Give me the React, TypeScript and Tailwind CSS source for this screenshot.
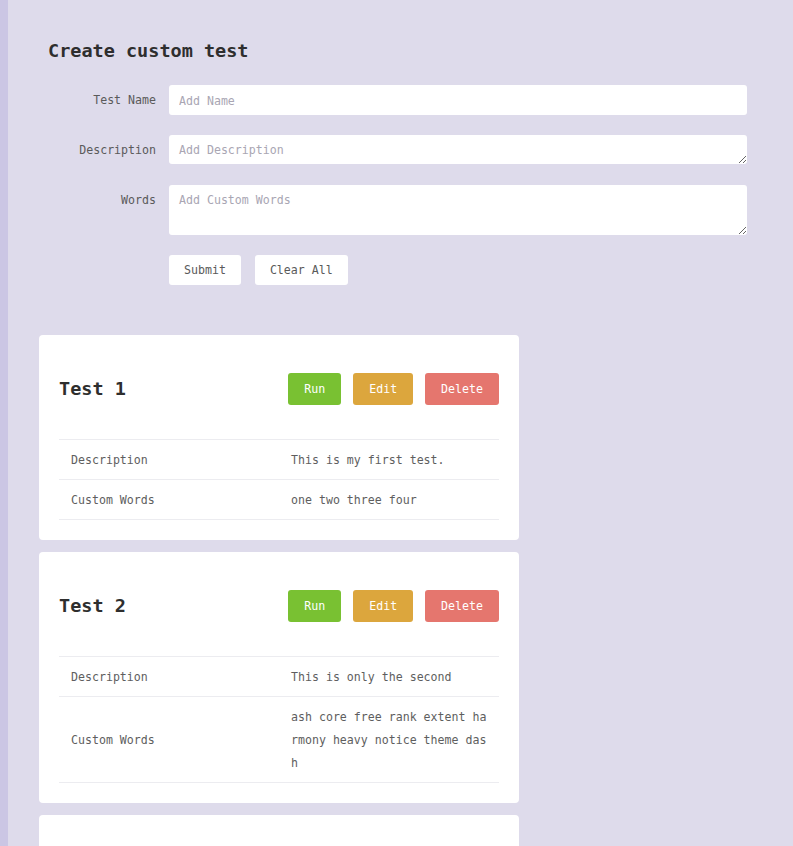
import React from "react";

const mono = { fontFamily: "'DejaVu Sans Mono', 'Liberation Mono', monospace" };

type Test = { name: string; description: string; words: string };

const tests: Test[] = [
  { name: "Test 1", description: "This is my first test.", words: "one two three four" },
  {
    name: "Test 2",
    description: "This is only the second",
    words: "ash core free rank extent harmony heavy notice theme dash",
  },
  { name: "Test 3", description: "Third test", words: "alpha beta gamma" },
];

function Card({ t }: { t: Test }) {
  return (
    <div className="bg-white rounded-[4px] px-5 pt-[38px] pb-5 w-[480px]">
      <div className="flex items-center justify-between h-8 mb-[34px]">
        <h2 className="text-[18.5px] font-bold text-[#2e2e2e] leading-none">{t.name}</h2>
        <div className="flex gap-3">
          <button className="h-8 px-4 pt-[2px] rounded-[3px] bg-[#79c132] text-white text-[11.6px]">Run</button>
          <button className="h-8 px-4 pt-[2px] rounded-[3px] bg-[#dca63d] text-white text-[11.6px]">Edit</button>
          <button className="h-8 px-4 pt-[2px] rounded-[3px] bg-[#e5766e] text-white text-[11.6px]">Delete</button>
        </div>
      </div>
      <table className="w-full table-fixed border-collapse text-[11.6px] text-[#5e5e5e]">
        <tbody>
          <tr className="border-t border-b border-[#ececf0]">
            <td className="w-1/2 px-3 pt-[9px] pb-[7px] leading-[23px] align-middle">Description</td>
            <td className="w-1/2 px-3 pt-[9px] pb-[7px] leading-[23px] align-middle break-all">{t.description}</td>
          </tr>
          <tr className="border-b border-[#ececf0]">
            <td className="px-3 pt-[9px] pb-[7px] leading-[23px] align-middle">Custom Words</td>
            <td className="px-3 pt-[9px] pb-[7px] leading-[23px] align-middle break-all">{t.words}</td>
          </tr>
        </tbody>
      </table>
    </div>
  );
}

export default function App() {
  return (
    <div className="h-[846px] overflow-hidden bg-[#dedbeb] flex" style={mono}>
      <div className="w-2 shrink-0 bg-[#cbc6e4]" />
      <div className="flex-1 min-w-0">
        <div className="pl-10 pt-[37px]">
          <h1 className="text-[18.5px] font-bold text-[#2e2e2e] leading-[28px]">Create custom test</h1>
        </div>
        <div className="mt-[20px] flex flex-col text-[11.6px]">
          <div className="flex items-start">
            <label className="w-[148px] shrink-0 text-right text-[#5a5a5a] h-[30px] pt-[2px] flex items-center justify-end">Test Name</label>
            <input
              placeholder="Add Name"
              className="ml-[13px] w-[578px] h-[30px] bg-white rounded-[3px] px-[10px] pt-[1px] outline-none text-[#5a5a5a] placeholder:text-[#a9a6b3]"
            />
          </div>
          <div className="flex items-start mt-5">
            <label className="w-[148px] shrink-0 text-right text-[#5a5a5a] h-[29px] pt-[2px] flex items-center justify-end">Description</label>
            <textarea
              placeholder="Add Description"
              className="ml-[13px] w-[578px] h-[29px] bg-white rounded-[3px] px-[10px] pt-[7px] pb-[5px] leading-[17px] outline-none text-[#5a5a5a] placeholder:text-[#a9a6b3] block"
            />
          </div>
          <div className="flex items-start mt-[21px]">
            <label className="w-[148px] shrink-0 text-right text-[#5a5a5a] h-[29px] pt-[2px] flex items-center justify-end">Words</label>
            <textarea
              placeholder="Add Custom Words"
              className="ml-[13px] w-[578px] h-[50px] bg-white rounded-[3px] px-[10px] pt-[7px] pb-[5px] leading-[17px] outline-none text-[#5a5a5a] placeholder:text-[#a9a6b3] block"
            />
          </div>
          <div className="flex items-start pl-[161px] gap-[14px] mt-5">
            <button className="h-[30px] px-[15px] pt-[2px] bg-white rounded-[3px] text-[#5a5a5a]">Submit</button>
            <button className="h-[30px] px-[15px] pt-[2px] bg-white rounded-[3px] text-[#5a5a5a]">Clear All</button>
          </div>
        </div>
        <div className="mt-[50px] pl-[31px] flex flex-col gap-3">
          {tests.map((t) => (
            <Card key={t.name} t={t} />
          ))}
        </div>
      </div>
    </div>
  );
}
